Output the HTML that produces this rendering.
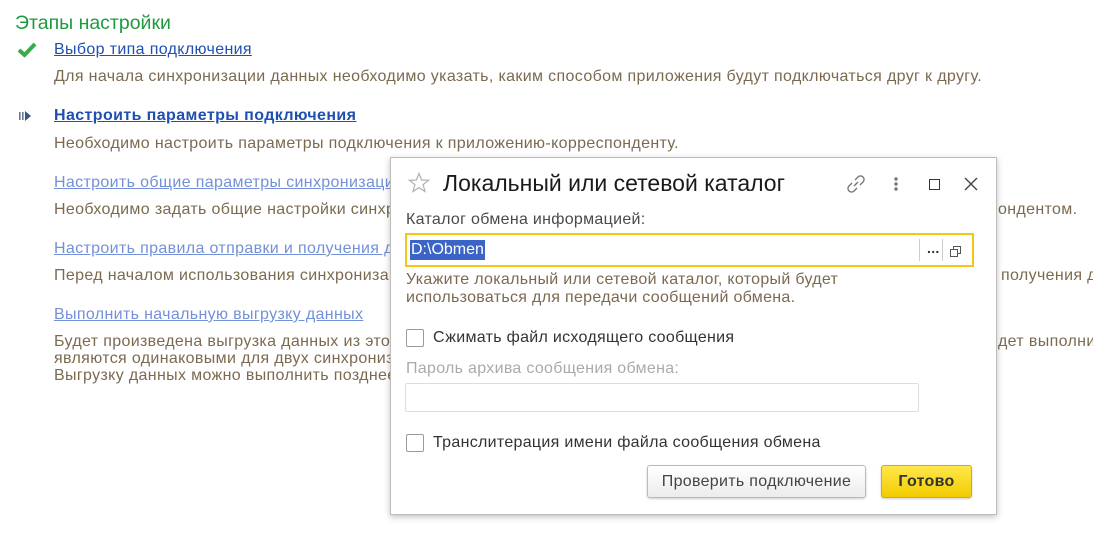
<!DOCTYPE html>
<html><head><meta charset="utf-8"><style>
*{margin:0;padding:0;box-sizing:border-box}
body{width:1093px;height:550px;background:#fff;font-family:"Liberation Sans",Arial,sans-serif;position:relative;overflow:hidden;color:#4a4a4a}
.a{position:absolute;white-space:nowrap}
.t{font-size:19.5px;color:#1f9a3f;left:15px;top:12px}
.l,.lf,.d{font-size:16px;letter-spacing:0.35px;left:54px}
.l{color:#1f4fb0;text-decoration:underline}
.lf{color:#7390d8;text-decoration:underline}
.d{color:#7b6a50;line-height:17px}
.dlg{position:absolute;left:390px;top:157px;width:607px;height:358px;background:#fff;border:1px solid #bdbdbd;box-shadow:0 2px 6px rgba(0,0,0,.25)}
.dlg .a{font-size:16px;letter-spacing:0.3px}
.cb{position:absolute;width:18px;height:18px;border:1px solid #9a9a9a;border-radius:2px;background:#fff}
</style></head><body>
<div class="a t">Этапы настройки</div>
<svg class="a" style="left:17px;top:42px" width="20" height="16" viewBox="0 0 20 16"><path d="M2 8 L7.5 13 L18 2" fill="none" stroke="#3daa4a" stroke-width="4"/></svg>
<div class="a l" style="top:41px">Выбор типа подключения</div>
<div class="a d" style="top:68px">Для начала синхронизации данных необходимо указать, каким способом приложения будут подключаться друг к другу.</div>
<svg class="a" style="left:19px;top:111px" width="16" height="10" viewBox="0 0 16 10"><rect x="0" y="1" width="1.6" height="8" fill="#6a7a90"/><rect x="3" y="1" width="1.6" height="8" fill="#6a7a90"/><path d="M6 0 L12 5 L6 10Z" fill="#3a5a85"/></svg>
<div class="a l" style="top:107px;font-weight:bold;letter-spacing:0.4px">Настроить параметры подключения</div>
<div class="a d" style="top:135px">Необходимо настроить параметры подключения к приложению-корреспонденту.</div>
<div class="a lf" style="top:174px">Настроить общие параметры синхронизации</div>
<div class="a d" style="top:201px">Необходимо задать общие настройки синхронизации</div>
<div class="a d" style="top:201px;left:998px">ондентом.</div>
<div class="a lf" style="top:240px">Настроить правила отправки и получения данных</div>
<div class="a d" style="top:267px">Перед началом использования синхронизации</div>
<div class="a d" style="top:267px;left:1001px">получения д</div>
<div class="a lf" style="top:306px">Выполнить начальную выгрузку данных</div>
<div class="a d" style="top:333px">Будет произведена выгрузка данных из этого приложения<br>являются одинаковыми для двух синхронизируемых<br>Выгрузку данных можно выполнить позднее.</div>
<div class="a d" style="top:333px;left:998px">дет выполнить</div>
<div class="dlg">
<svg class="a" style="left:17px;top:14px" width="22" height="22" viewBox="0 0 22 22"><path d="M11 1.5 L13.6 8 L20.5 8.3 L15.1 12.6 L17 19.5 L11 15.6 L5 19.5 L6.9 12.6 L1.5 8.3 L8.4 8Z" fill="none" stroke="#b0b0b0" stroke-width="1.2"/></svg>
<div class="a" style="left:52px;top:12px;font-size:23px !important;letter-spacing:0 !important;color:#1a1a1a">Локальный или сетевой каталог</div>
<svg class="a" style="left:455px;top:16px" width="20" height="20" viewBox="0 0 20 20"><g fill="none" stroke="#777" stroke-width="1.4"><path d="M8 12 L12 8"/><path d="M9 6 L12 3 a3 3 0 0 1 5 5 L14 11"/><path d="M11 14 L8 17 a3 3 0 0 1 -5 -5 L6 9"/></g></svg>
<svg class="a" style="left:502px;top:18px" width="6" height="16"><circle cx="3" cy="3" r="1.7" fill="#777"/><circle cx="3" cy="8" r="1.7" fill="#777"/><circle cx="3" cy="13" r="1.7" fill="#777"/></svg>
<div class="a" style="left:538px;top:21px;width:11px;height:11px;border:1.4px solid #333"></div>
<svg class="a" style="left:573px;top:19px" width="14" height="14"><path d="M1 1 L13 13 M13 1 L1 13" stroke="#444" stroke-width="1.4"/></svg>
<div class="a" style="left:15px;top:53px;color:#4a4a4a">Каталог обмена информацией:</div>
<div class="a" style="left:14px;top:75px;width:569px;height:34px;border:2px solid #f5c518;background:#fff">
<div class="a" style="left:3px;top:5px;background:#3a64c5;color:#fff;font-size:16px;letter-spacing:0;padding:1px 1px;line-height:18px">D:\Obmen</div>
<div class="a" style="left:512px;top:4px;width:1px;height:22px;background:#ccc"></div>
<div class="a" style="left:520px;top:5px;font-size:14px;color:#333;font-weight:bold">...</div>
<div class="a" style="left:535px;top:4px;width:1px;height:22px;background:#ccc"></div>
<div class="a" style="left:546px;top:11px;width:8px;height:8px;border:1.2px solid #555;background:#fff"></div>
<div class="a" style="left:543px;top:14px;width:8px;height:8px;border:1.2px solid #555;background:#fff"></div>
</div>
<div class="a" style="left:15px;top:113px;color:#7b6a50;line-height:18px">Укажите локальный или сетевой каталог, который будет<br>использоваться для передачи сообщений обмена.</div>
<div class="cb" style="left:15px;top:171px"></div>
<div class="a" style="left:42px;top:171px;color:#333">Сжимать файл исходящего сообщения</div>
<div class="a" style="left:15px;top:202px;color:#aaa">Пароль архива сообщения обмена:</div>
<div class="a" style="left:14px;top:225px;width:514px;height:29px;border:1px solid #ddd;border-radius:2px"></div>
<div class="cb" style="left:15px;top:276px"></div>
<div class="a" style="left:42px;top:276px;color:#333">Транслитерация имени файла сообщения обмена</div>
<div class="a" style="left:256px;top:307px;width:219px;height:33px;border:1px solid #bbb;border-radius:3px;background:linear-gradient(#fff,#ececec);box-shadow:0 1px 2px rgba(0,0,0,.2);text-align:center;line-height:31px;color:#444">Проверить подключение</div>
<div class="a" style="left:490px;top:307px;width:91px;height:33px;border:1px solid #d4b000;border-radius:3px;background:linear-gradient(#ffe74a,#f2cc00);box-shadow:0 1px 2px rgba(0,0,0,.2);text-align:center;line-height:31px;color:#333;font-weight:bold">Готово</div>
</div>
</body></html>
